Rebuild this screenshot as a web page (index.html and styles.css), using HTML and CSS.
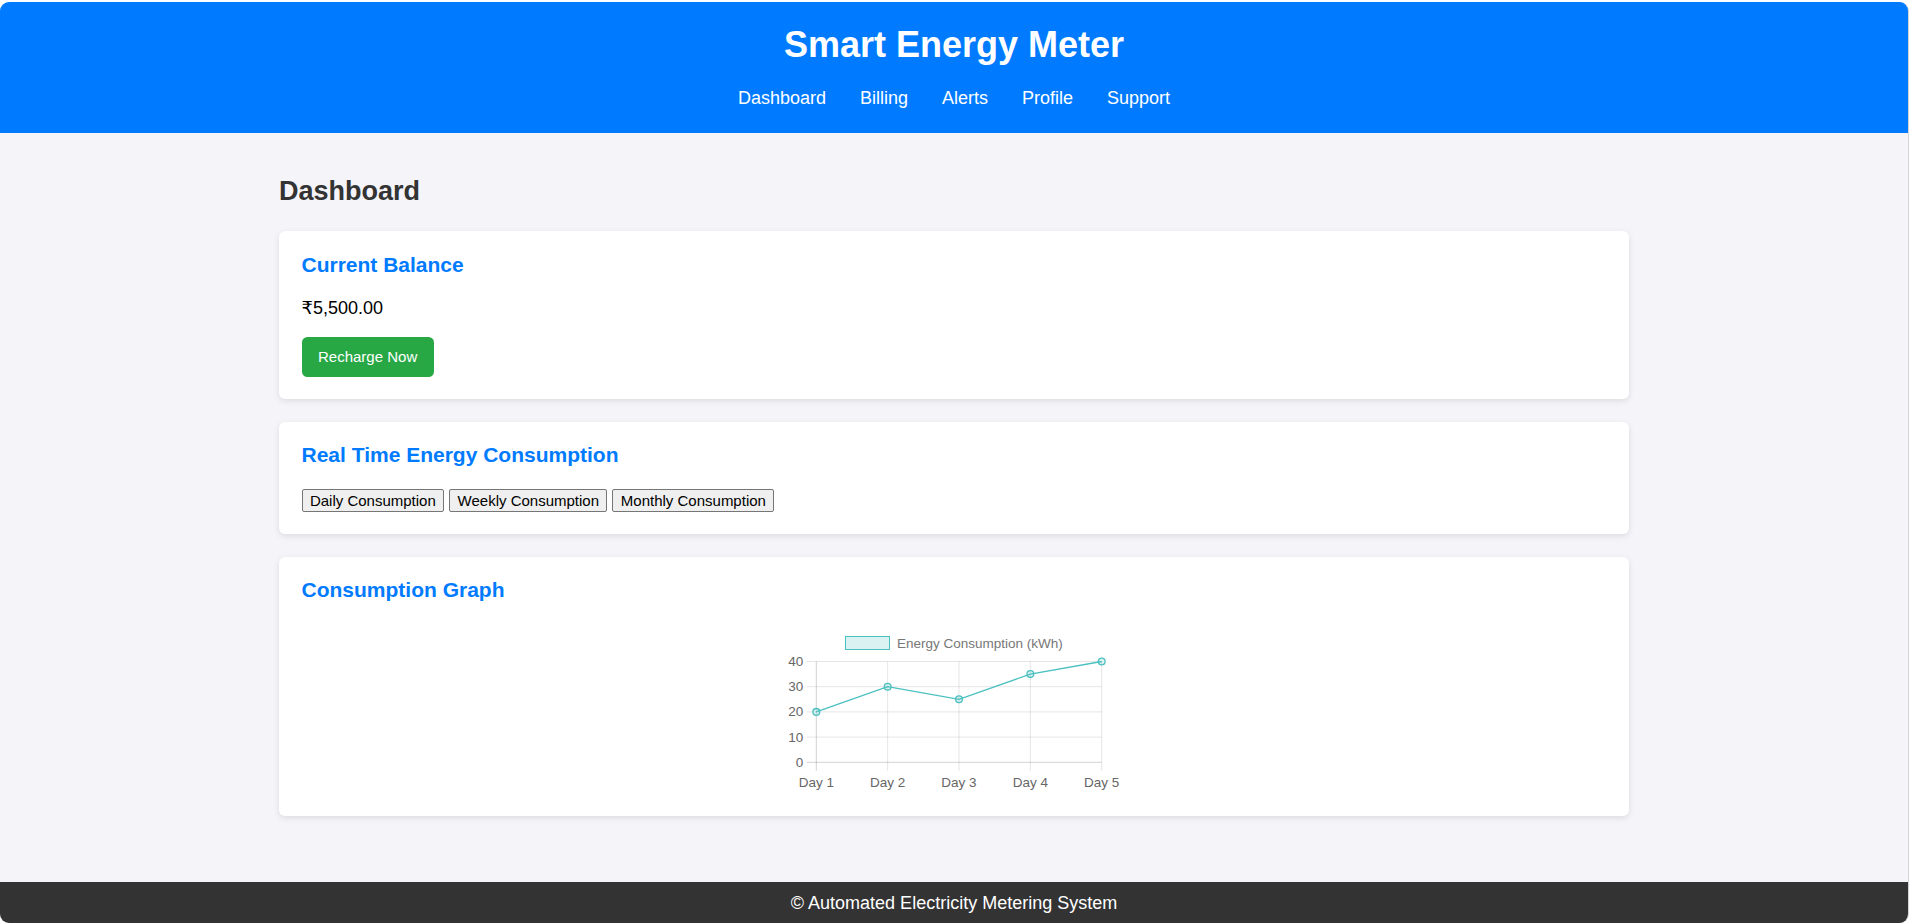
FILE: index.html
```html
<!DOCTYPE html>
<html lang="en">
<head>
<meta charset="utf-8">
<title>Smart Energy Meter</title>
<link rel="stylesheet" href="styles.css">
</head>
<body>
<div class="window">
  <header class="top">
    <h1 class="title">Smart Energy Meter</h1>
    <nav class="nav">
      <a href="#">Dashboard</a>
      <a href="#">Billing</a>
      <a href="#">Alerts</a>
      <a href="#">Profile</a>
      <a href="#">Support</a>
    </nav>
  </header>
  <main class="main">
    <div class="container">
      <h2 class="page-title">Dashboard</h2>
      <section class="card">
        <h3 class="card-title">Current Balance</h3>
        <p class="balance">₹5,500.00</p>
        <button class="btn-green">Recharge Now</button>
      </section>
      <section class="card">
        <h3 class="card-title">Real Time Energy Consumption</h3>
        <div class="btn-row">
          <button class="btn-plain">Daily Consumption</button>
          <button class="btn-plain">Weekly Consumption</button>
          <button class="btn-plain">Monthly Consumption</button>
        </div>
      </section>
      <section class="card">
        <h3 class="card-title">Consumption Graph</h3>
        <svg class="chart" width="360" height="170" viewBox="0 0 360 170">
          <rect x="71.5" y="12.5" width="44" height="13" fill="rgba(75,192,192,0.2)" stroke="rgb(75,192,192)" stroke-width="1"/>
          <text x="123" y="23.5" class="legend">Energy Consumption (kWh)</text>
          <g stroke="rgba(0,0,0,0.1)" stroke-width="1">
            <line x1="32.7" y1="37.5" x2="327.7" y2="37.5"/>
            <line x1="32.7" y1="62.7" x2="327.7" y2="62.7"/>
            <line x1="32.7" y1="87.9" x2="327.7" y2="87.9"/>
            <line x1="32.7" y1="113.1" x2="327.7" y2="113.1"/>
            <line x1="113.65" y1="37.5" x2="113.65" y2="146.8"/>
            <line x1="185" y1="37.5" x2="185" y2="146.8"/>
            <line x1="256.35" y1="37.5" x2="256.35" y2="146.8"/>
            <line x1="327.7" y1="37.5" x2="327.7" y2="146.8"/>
          </g>
          <g stroke="rgba(0,0,0,0.18)" stroke-width="1">
            <line x1="32.7" y1="138.3" x2="327.7" y2="138.3"/>
            <line x1="42.3" y1="37.5" x2="42.3" y2="146.8"/>
          </g>
          <g class="tick" text-anchor="end">
            <text x="29.3" y="42">40</text>
            <text x="29.3" y="67.2">30</text>
            <text x="29.3" y="92.4">20</text>
            <text x="29.3" y="117.6">10</text>
            <text x="29.3" y="142.8">0</text>
          </g>
          <g class="tick" text-anchor="middle">
            <text x="42.3" y="163">Day 1</text>
            <text x="113.65" y="163">Day 2</text>
            <text x="185" y="163">Day 3</text>
            <text x="256.35" y="163">Day 4</text>
            <text x="327.7" y="163">Day 5</text>
          </g>
          <polyline points="42.3,87.9 113.65,62.7 185,75.3 256.35,50.1 327.7,37.5" fill="none" stroke="rgb(75,192,192)" stroke-width="1.3"/>
          <g fill="rgba(75,192,192,0.2)" stroke="rgb(75,192,192)" stroke-width="1.3">
            <circle cx="42.3" cy="87.9" r="3.4"/>
            <circle cx="113.65" cy="62.7" r="3.4"/>
            <circle cx="185" cy="75.3" r="3.4"/>
            <circle cx="256.35" cy="50.1" r="3.4"/>
            <circle cx="327.7" cy="37.5" r="3.4"/>
          </g>
        </svg>
      </section>
    </div>
  </main>
  <footer class="foot">© Automated Electricity Metering System</footer>
</div>
</body>
</html>
```
FILE: styles.css
```css
html, body {
  margin: 0;
  padding: 0;
  height: 923px;
  overflow: hidden;
  background: #ffffff;
}

body {
  font-family: "Liberation Sans", Arial, "DejaVu Sans", sans-serif;
  font-size: 18px;
}

.window {
  margin-top: 2px;
  width: 1908px;
  height: 921px;
  border-right: 1px solid #d4d4d8;
  border-radius: 9px;
  overflow: hidden;
  display: flex;
  flex-direction: column;
  background: #f4f4f9;
}

.top {
  background: #007bff;
  color: #fff;
  text-align: center;
  padding: 23px 0 24px;
}

.title {
  margin: 0;
  font-size: 36px;
  line-height: 40px;
  font-weight: bold;
}

.nav {
  margin-top: 23px;
  display: flex;
  justify-content: center;
  gap: 34px;
  line-height: 21px;
}

.nav a {
  color: #fff;
  text-decoration: none;
  font-size: 18px;
}

.main {
  flex: 1;
}

.container {
  max-width: 1350px;
  margin: 0 auto;
  padding-top: 43px;
}

.page-title {
  margin: 0 0 25px;
  font-size: 27px;
  line-height: 30px;
  color: #333;
  font-weight: bold;
}

.card {
  background: #fff;
  border-radius: 6px;
  box-shadow: 0 2px 6px rgba(0, 0, 0, 0.1);
  padding: 22.5px;
  margin-bottom: 22.5px;
}

.card-title {
  margin: 0 0 21px;
  font-size: 21px;
  line-height: 22.5px;
  padding-bottom: 1px;
  color: #007bff;
  font-weight: bold;
}

.balance {
  margin: 0 0 18px;
  font-size: 18px;
  line-height: 20.7px;
  color: #000;
}

.btn-green {
  background: #28a745;
  color: #fff;
  border: none;
  border-radius: 5.5px;
  padding: 11.25px 16.5px;
  font-family: "Liberation Sans", Arial, sans-serif;
  font-size: 15px;
  line-height: 17.5px;
  display: block;
}

.btn-row {
  line-height: 23px;
  font-size: 18px;
}

.btn-plain {
  font-family: "Liberation Sans", Arial, sans-serif;
  font-size: 15px;
  line-height: 17px;
  padding: 1px 7.4px;
  background: #efefef;
  color: #000;
  border: 1px solid #767676;
  border-radius: 2px;
  height: 23px;
  vertical-align: top;
}

.chart {
  display: block;
  margin: 0 auto;
}

.legend, .tick {
  font-family: "Liberation Sans", Arial, sans-serif;
  font-size: 13.5px;
  fill: #666;
}

.legend {
  fill: #777;
}

.foot {
  background: #333;
  color: #fff;
  text-align: center;
  height: 41px;
  box-sizing: border-box;
  padding-top: 11px;
  font-size: 18px;
  line-height: 21px;
}
```
